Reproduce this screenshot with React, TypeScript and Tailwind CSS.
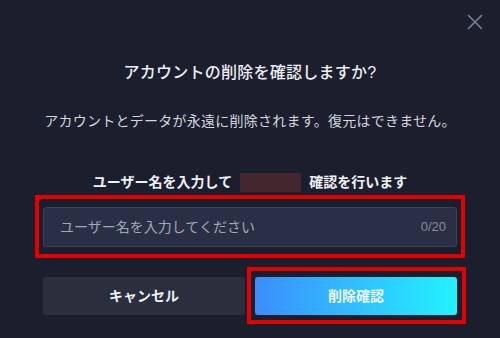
import React from "react";

const jp = { fontFamily: '"Liberation Sans", "Noto Sans CJK JP", sans-serif' };

export default function App() {
  return (
    <div className="relative w-[500px] h-[338px] overflow-hidden bg-[#1b1f2d]" style={jp}>
      {/* close */}
      <button className="absolute left-[466px] top-[13px] w-[18px] h-[18px] flex items-center justify-center">
        <svg width="16" height="16" viewBox="0 0 16 16" fill="none" stroke="#7b8194" strokeWidth="1.6" strokeLinecap="round">
          <path d="M1.5 1.5 L14.5 14.5 M14.5 1.5 L1.5 14.5" />
        </svg>
      </button>

      <div className="flex flex-col px-[43px] pt-[61px]">
        <h2 className="text-center text-[16px] leading-[24px] tracking-[0.25px] text-[#eceef3] font-medium">
          アカウントの削除を確認しますか?
        </h2>
        <p className="mt-[26px] text-center text-[14px] leading-[20px] tracking-[0.25px] text-[#d3d6de]">
          アカウントとデータが永遠に削除されます。復元はできません。
        </p>

        <div className="mt-[41px] flex items-center justify-center text-[14px] leading-[20px] font-bold text-[#eef0f4]">
          <span>ユーザー名を入力して</span>
          <span className="mx-[8px] inline-block w-[61px] h-[19px] bg-[#44262f]" />
          <span>確認を行います</span>
        </div>

        {/* input */}
        <div className="relative mt-[15px]">
          <div className="flex items-center h-[40px] rounded-[3px] border border-[#3b4060] bg-[#2a2f46] pl-[16px] pr-[10px]">
            <span className="flex-1 text-[14px] text-[#a3a8b8]">ユーザー名を入力してください</span>
            <span className="text-[13px] text-[#878c9c]">0/20</span>
          </div>
          <div className="absolute -left-[8px] -right-[8px] -top-[12px] -bottom-[11px] border-[4px] border-[#e50000] pointer-events-none" />
        </div>

        {/* buttons */}
        <div className="mt-[30px] flex gap-[10px]">
          <button className="flex-1 h-[38px] rounded-[3px] bg-[#2a2e3d] text-[14px] font-bold text-[#eef0f4]">
            キャンセル
          </button>
          <div className="relative flex-1">
            <button className="w-full h-[38px] rounded-[3px] bg-gradient-to-r from-[#3b8cfb] to-[#22f2ff] text-[14px] font-bold text-[#f2f8ff]">
              削除確認
            </button>
            <div className="absolute -left-[8px] -right-[9px] -top-[10px] -bottom-[9px] border-[4px] border-[#e50000] pointer-events-none" />
          </div>
        </div>
      </div>
    </div>
  );
}
